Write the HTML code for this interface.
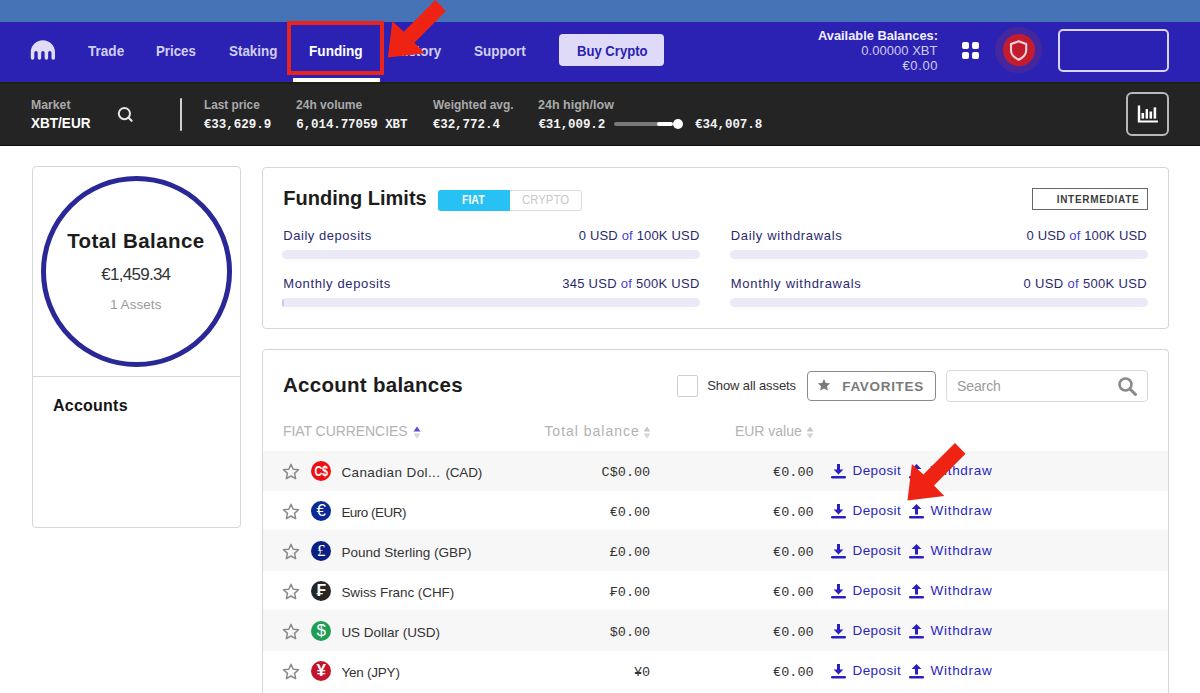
<!DOCTYPE html>
<html><head><meta charset="utf-8"><style>
html,body{margin:0;padding:0;width:1200px;height:693px;overflow:hidden;background:#fff;}
.b{position:absolute;}
.t{position:absolute;white-space:pre;}
</style></head><body>
<div class="b" style="left:0px;top:0px;width:1200px;height:22px;background:#4672b6"></div>
<div class="b" style="left:0px;top:22px;width:1200px;height:60px;background:#2b22b4"></div>
<div class="b" style="left:0px;top:82px;width:1200px;height:64px;background:#242424"></div>
<div class="b" style="left:0px;top:82px;width:1200px;height:1.5px;background:#1f1f0c"></div>
<div class="b" style="left:0px;top:145px;width:1200px;height:1px;background:#0c0c0c"></div>
<svg class="b" style="left:30px;top:40px" width="27" height="21" viewBox="0 0 27 21"><path fill="#e0dcf8" d="M12.9 0.2C6.2 0.2 0.8 5.6 0.8 12.2V18.05a1.75 1.75 0 0 0 3.5 0V12.7a1.7 1.7 0 0 1 3.4 0V18.05a1.75 1.75 0 0 0 3.5 0V12.7a1.7 1.7 0 0 1 3.4 0V18.05a1.75 1.75 0 0 0 3.5 0V12.7a1.7 1.7 0 0 1 3.4 0V18.05a1.75 1.75 0 0 0 3.5 0V12.2C25 5.6 19.6 0.2 12.9 0.2z"/></svg>
<div class="t" style="left:87.50px;top:41.54px;font-size:14.60px;line-height:18px;font-weight:bold;color:#d2cef2;letter-spacing:0.000px;font-family:'Liberation Sans',sans-serif;transform:scaleX(0.9295);transform-origin:0.00px 0;">Trade</div>
<div class="t" style="left:156.30px;top:41.54px;font-size:14.60px;line-height:18px;font-weight:bold;color:#d2cef2;letter-spacing:0.000px;font-family:'Liberation Sans',sans-serif;transform:scaleX(0.9102);transform-origin:0.00px 0;">Prices</div>
<div class="t" style="left:228.80px;top:41.54px;font-size:14.60px;line-height:18px;font-weight:bold;color:#d2cef2;letter-spacing:0.000px;font-family:'Liberation Sans',sans-serif;transform:scaleX(0.9177);transform-origin:0.00px 0;">Staking</div>
<div class="t" style="left:309.20px;top:41.54px;font-size:14.60px;line-height:18px;font-weight:bold;color:#ffffff;letter-spacing:0.000px;font-family:'Liberation Sans',sans-serif;transform:scaleX(0.9329);transform-origin:0.00px 0;">Funding</div>
<div class="t" style="left:395.00px;top:41.54px;font-size:14.60px;line-height:18px;font-weight:bold;color:#d2cef2;letter-spacing:0.000px;font-family:'Liberation Sans',sans-serif;transform:scaleX(0.9166);transform-origin:0.00px 0;">History</div>
<div class="t" style="left:474.30px;top:41.54px;font-size:14.60px;line-height:18px;font-weight:bold;color:#d2cef2;letter-spacing:0.000px;font-family:'Liberation Sans',sans-serif;transform:scaleX(0.9240);transform-origin:0.00px 0;">Support</div>
<div class="b" style="left:559px;top:34px;width:105px;height:32px;background:#dedaf8;border-radius:4px"></div>
<div class="t" style="left:576.50px;top:41.54px;font-size:14.60px;line-height:18px;font-weight:bold;color:#2a22b0;letter-spacing:0.000px;font-family:'Liberation Sans',sans-serif;transform:scaleX(0.8971);transform-origin:0.00px 0;">Buy Crypto</div>
<div class="b" style="left:293px;top:78px;width:87px;height:4px;background:#ffffff"></div>
<div class="t" style="left:817.50px;top:28.54px;font-size:12.30px;line-height:15px;font-weight:bold;color:#f2f0ff;letter-spacing:0.000px;font-family:'Liberation Sans',sans-serif;transform:scaleX(1.0426);transform-origin:0.00px 0;">Available Balances:</div>
<div class="t" style="left:861.30px;top:42.79px;font-size:13.00px;line-height:16px;font-weight:normal;color:#cfcaf2;letter-spacing:0.031px;font-family:'Liberation Sans',sans-serif;">0.00000 XBT</div>
<div class="t" style="left:902.50px;top:57.79px;font-size:13.00px;line-height:16px;font-weight:normal;color:#cfcaf2;letter-spacing:0.617px;font-family:'Liberation Sans',sans-serif;">€0.00</div>
<div class="b" style="left:962.2px;top:42px;width:7.2px;height:7.2px;background:#fff;border-radius:2px"></div>
<div class="b" style="left:971.8px;top:42px;width:7.2px;height:7.2px;background:#fff;border-radius:2px"></div>
<div class="b" style="left:962.2px;top:51.5px;width:7.2px;height:7.2px;background:#fff;border-radius:2px"></div>
<div class="b" style="left:971.8px;top:51.5px;width:7.2px;height:7.2px;background:#fff;border-radius:2px"></div>
<div class="b" style="left:995px;top:27px;width:46.5px;height:46px;background:#44279f;border-radius:50%"></div>
<div class="b" style="left:1002.5px;top:34px;width:32.5px;height:32px;background:#c41c2f;border-radius:50%"></div>
<svg class="b" style="left:1009px;top:40px" width="20" height="22" viewBox="0 0 20 22"><path fill="none" stroke="#f6d4d8" stroke-width="2.1" stroke-linejoin="round" d="M9.6 1.3L2 4.1v6.2c0 3.9 3.3 7.4 7.6 9.5 4.3-2.1 7.6-5.6 7.6-9.5V4.1z"/></svg>
<div class="b" style="left:1058px;top:29px;width:111px;height:43px;border:2px solid #d8d4f6;border-radius:5px;box-sizing:border-box"></div>
<div class="t" style="left:31.30px;top:97.17px;font-size:12.50px;line-height:16px;font-weight:bold;color:#a9a9a9;letter-spacing:0.000px;font-family:'Liberation Sans',sans-serif;transform:scaleX(0.9806);transform-origin:0.00px 0;">Market</div>
<div class="t" style="left:31.30px;top:113.97px;font-size:14.50px;line-height:18px;font-weight:bold;color:#ffffff;letter-spacing:0.000px;font-family:'Liberation Sans',sans-serif;transform:scaleX(0.9347);transform-origin:0.00px 0;">XBT/EUR</div>
<svg class="b" style="left:116.7px;top:106px" width="18" height="17" viewBox="0 0 18 17"><circle cx="7.4" cy="7.6" r="5.6" fill="none" stroke="#e6e6e6" stroke-width="2"/><path d="M11.6 11.8L14.6 14.8" stroke="#e6e6e6" stroke-width="2.2" stroke-linecap="round"/></svg>
<div class="b" style="left:180px;top:97.7px;width:2.4px;height:33.6px;background:#d0d0d0;border-radius:1.2px"></div>
<div class="t" style="left:203.75px;top:97.17px;font-size:12.50px;line-height:16px;font-weight:bold;color:#a9a9a9;letter-spacing:0.000px;font-family:'Liberation Sans',sans-serif;transform:scaleX(0.9439);transform-origin:0.00px 0;">Last price</div>
<div class="t" style="left:203.75px;top:117.17px;font-size:12.50px;line-height:16px;font-weight:bold;color:#f4f4f4;letter-spacing:0.000px;font-family:'Liberation Mono',monospace;">€33,629.9</div>
<div class="t" style="left:296.25px;top:97.17px;font-size:12.50px;line-height:16px;font-weight:bold;color:#a9a9a9;letter-spacing:0.000px;font-family:'Liberation Sans',sans-serif;transform:scaleX(0.9632);transform-origin:0.00px 0;">24h volume</div>
<div class="t" style="left:296.25px;top:117.17px;font-size:12.50px;line-height:16px;font-weight:bold;color:#f4f4f4;letter-spacing:-0.092px;font-family:'Liberation Mono',monospace;">6,014.77059 XBT</div>
<div class="t" style="left:432.70px;top:97.17px;font-size:12.50px;line-height:16px;font-weight:bold;color:#a9a9a9;letter-spacing:0.000px;font-family:'Liberation Sans',sans-serif;transform:scaleX(0.9538);transform-origin:0.00px 0;">Weighted avg.</div>
<div class="t" style="left:432.70px;top:117.17px;font-size:12.50px;line-height:16px;font-weight:bold;color:#f4f4f4;letter-spacing:-0.025px;font-family:'Liberation Mono',monospace;">€32,772.4</div>
<div class="t" style="left:538.40px;top:97.17px;font-size:12.50px;line-height:16px;font-weight:bold;color:#a9a9a9;letter-spacing:0.000px;font-family:'Liberation Sans',sans-serif;transform:scaleX(1.0024);transform-origin:0.00px 0;">24h high/low</div>
<div class="t" style="left:538.40px;top:117.17px;font-size:12.50px;line-height:16px;font-weight:bold;color:#f4f4f4;letter-spacing:-0.087px;font-family:'Liberation Mono',monospace;">€31,009.2</div>
<div class="b" style="left:614px;top:122px;width:58px;height:4px;background:#7a7a7a;border-radius:2px"></div>
<div class="b" style="left:657px;top:122px;width:16px;height:4px;background:#ffffff;border-radius:2px"></div>
<div class="b" style="left:673px;top:119px;width:10px;height:10px;background:#ffffff;border-radius:50%"></div>
<div class="t" style="left:695.00px;top:117.17px;font-size:12.50px;line-height:16px;font-weight:bold;color:#f4f4f4;letter-spacing:-0.025px;font-family:'Liberation Mono',monospace;">€34,007.8</div>
<div class="b" style="left:1126px;top:92px;width:43px;height:44px;border:2px solid #b8b8b8;border-radius:6px;box-sizing:border-box"></div>
<svg class="b" style="left:1130px;top:100px" width="35" height="30" viewBox="0 0 35 30"><path d="M7.8 5.4h2.4v15h17.7v2.1H7.8z" fill="#fff"/><rect x="11.5" y="13" width="2.6" height="5.6" fill="#fff"/><rect x="15.6" y="9.1" width="2.4" height="9.5" fill="#fff"/><rect x="19.5" y="11.5" width="2.6" height="7.1" fill="#fff"/><rect x="23.6" y="7.4" width="2.6" height="11.2" fill="#fff"/></svg>
<div class="b" style="left:31.5px;top:166px;width:209.5px;height:362px;border:1px solid #d6d6d6;border-radius:4px;box-sizing:border-box;background:#fff"></div>
<div class="b" style="left:32px;top:375.5px;width:208px;height:1px;background:#d6d6d6"></div>
<div class="b" style="left:41px;top:176px;width:190.5px;height:190.5px;border:5.5px solid #2a2896;border-radius:50%;box-sizing:border-box"></div>
<div class="t" style="left:67.20px;top:228.19px;font-size:20.50px;line-height:26px;font-weight:bold;color:#1c1c1c;letter-spacing:0.436px;font-family:'Liberation Sans',sans-serif;">Total Balance</div>
<div class="t" style="left:101.30px;top:264.41px;font-size:17.00px;line-height:21px;font-weight:normal;color:#333333;letter-spacing:-0.731px;font-family:'Liberation Sans',sans-serif;">€1,459.34</div>
<div class="t" style="left:110.00px;top:296.22px;font-size:13.50px;line-height:17px;font-weight:normal;color:#9a9a9a;letter-spacing:0.053px;font-family:'Liberation Sans',sans-serif;">1 Assets</div>
<div class="t" style="left:53.00px;top:395.65px;font-size:16.00px;line-height:20px;font-weight:bold;color:#141414;letter-spacing:0.240px;font-family:'Liberation Sans',sans-serif;">Accounts</div>
<div class="b" style="left:262px;top:166.5px;width:906.5px;height:162px;border:1px solid #d6d6d6;border-radius:4px;box-sizing:border-box;background:#fff"></div>
<div class="t" style="left:283.30px;top:186.37px;font-size:20.00px;line-height:25px;font-weight:bold;color:#1c1c1c;letter-spacing:0.008px;font-family:'Liberation Sans',sans-serif;">Funding Limits</div>
<div class="b" style="left:438px;top:189.5px;width:144px;height:21.5px;border:1px solid #dcdcdc;border-radius:3px;box-sizing:border-box"></div>
<div class="b" style="left:438px;top:189.5px;width:72px;height:21.5px;background:#27c1f4;border-radius:3px 0 0 3px"></div>
<div class="t" style="left:461.90px;top:192.07px;font-size:12.50px;line-height:16px;font-weight:bold;color:#ffffff;letter-spacing:0.000px;font-family:'Liberation Sans',sans-serif;transform:scaleX(0.8419);transform-origin:0.00px 0;">FIAT</div>
<div class="t" style="left:522.00px;top:192.07px;font-size:12.50px;line-height:16px;font-weight:normal;color:#c8c8c8;letter-spacing:0.000px;font-family:'Liberation Sans',sans-serif;transform:scaleX(0.9104);transform-origin:0.00px 0;">CRYPTO</div>
<div class="b" style="left:1032px;top:188.3px;width:116px;height:21.3px;border:1px solid #666;box-sizing:border-box"></div>
<div class="t" style="left:1056.70px;top:194.03px;font-size:10.00px;line-height:12px;font-weight:bold;color:#3c3c3c;letter-spacing:0.705px;font-family:'Liberation Sans',sans-serif;">INTERMEDIATE</div>
<div class="t" style="left:283.30px;top:227.79px;font-size:13.00px;line-height:16px;font-weight:normal;color:#2b2a6e;letter-spacing:0.537px;font-family:'Liberation Sans',sans-serif;">Daily deposits</div>
<div class="t" style="left:578.70px;top:227.79px;font-size:13.00px;line-height:16px;font-weight:normal;color:#2b2a6e;letter-spacing:0.176px;font-family:'Liberation Sans',sans-serif;">0 USD <span style="color:#4a40cc">of</span> 100K USD</div>
<div class="b" style="left:282px;top:250px;width:418px;height:9px;background:#ebe9f8;border-radius:4.5px"></div>
<div class="t" style="left:283.30px;top:276.29px;font-size:13.00px;line-height:16px;font-weight:normal;color:#2b2a6e;letter-spacing:0.629px;font-family:'Liberation Sans',sans-serif;">Monthly deposits</div>
<div class="t" style="left:562.20px;top:276.29px;font-size:13.00px;line-height:16px;font-weight:normal;color:#2b2a6e;letter-spacing:0.270px;font-family:'Liberation Sans',sans-serif;">345 USD <span style="color:#4a40cc">of</span> 500K USD</div>
<div class="b" style="left:282px;top:298px;width:418px;height:9px;background:#ebe9f8;border-radius:4.5px"></div>
<div class="b" style="left:282px;top:298.5px;width:2px;height:8px;background:#cdc8f2;border-radius:4px 0 0 4px"></div>
<div class="t" style="left:730.70px;top:227.79px;font-size:13.00px;line-height:16px;font-weight:normal;color:#2b2a6e;letter-spacing:0.661px;font-family:'Liberation Sans',sans-serif;">Daily withdrawals</div>
<div class="t" style="left:1026.50px;top:227.79px;font-size:13.00px;line-height:16px;font-weight:normal;color:#2b2a6e;letter-spacing:0.151px;font-family:'Liberation Sans',sans-serif;">0 USD <span style="color:#4a40cc">of</span> 100K USD</div>
<div class="b" style="left:730px;top:250px;width:418px;height:9px;background:#ebe9f8;border-radius:4.5px"></div>
<div class="t" style="left:730.70px;top:276.29px;font-size:13.00px;line-height:16px;font-weight:normal;color:#2b2a6e;letter-spacing:0.726px;font-family:'Liberation Sans',sans-serif;">Monthly withdrawals</div>
<div class="t" style="left:1023.40px;top:276.29px;font-size:13.00px;line-height:16px;font-weight:normal;color:#2b2a6e;letter-spacing:0.345px;font-family:'Liberation Sans',sans-serif;">0 USD <span style="color:#4a40cc">of</span> 500K USD</div>
<div class="b" style="left:730px;top:298px;width:418px;height:9px;background:#ebe9f8;border-radius:4.5px"></div>
<div class="b" style="left:262px;top:348.5px;width:906.5px;height:400px;border:1px solid #d6d6d6;border-radius:4px;box-sizing:border-box;background:#fff"></div>
<div class="t" style="left:283.00px;top:372.09px;font-size:20.50px;line-height:26px;font-weight:bold;color:#1c1c1c;letter-spacing:0.278px;font-family:'Liberation Sans',sans-serif;">Account balances</div>
<div class="b" style="left:677px;top:375px;width:21px;height:21.5px;border:1px solid #cfcfcf;border-radius:2px;box-sizing:border-box;background:#fff"></div>
<div class="t" style="left:707.30px;top:378.29px;font-size:13.00px;line-height:16px;font-weight:normal;color:#333333;letter-spacing:-0.116px;font-family:'Liberation Sans',sans-serif;">Show all assets</div>
<div class="b" style="left:807px;top:370.5px;width:128.5px;height:30px;border:1.5px solid #8a8a8a;border-radius:4px;box-sizing:border-box"></div>
<svg class="b" style="left:817px;top:378px" width="14" height="14" viewBox="0 0 24 24"><path fill="#7a7a7a" d="M12 1.5l3.2 6.9 7.3.8-5.4 5 1.5 7.3L12 17.8l-6.6 3.7 1.5-7.3-5.4-5 7.3-.8z"/></svg>
<div class="t" style="left:842.20px;top:377.62px;font-size:13.50px;line-height:17px;font-weight:bold;color:#7a7a7a;letter-spacing:0.688px;font-family:'Liberation Sans',sans-serif;">FAVORITES</div>
<div class="b" style="left:945.5px;top:369.5px;width:202.5px;height:32px;border:1px solid #d8d8d8;border-radius:4px;box-sizing:border-box"></div>
<div class="t" style="left:957.00px;top:376.95px;font-size:14.00px;line-height:18px;font-weight:normal;color:#9a9a9a;letter-spacing:-0.109px;font-family:'Liberation Sans',sans-serif;">Search</div>
<svg class="b" style="left:1117px;top:376px" width="21" height="20" viewBox="0 0 21 20"><circle cx="8.5" cy="8.5" r="6" fill="none" stroke="#8a8a8a" stroke-width="2.6"/><path d="M13 13L18.5 18.5" stroke="#8a8a8a" stroke-width="3" stroke-linecap="round"/></svg>
<div class="t" style="left:283.00px;top:422.45px;font-size:14.00px;line-height:18px;font-weight:normal;color:#b2b2b2;letter-spacing:-0.065px;font-family:'Liberation Sans',sans-serif;">FIAT CURRENCIES</div>
<svg class="b" style="left:413px;top:426px" width="8" height="13" viewBox="0 0 8 13"><path d="M4 0.5L7.5 5.5H0.5z" fill="#5a50d0"/><path d="M4 12.5L7.5 7.5H0.5z" fill="#d6d6d6"/></svg>
<div class="t" style="left:544.40px;top:422.45px;font-size:14.00px;line-height:18px;font-weight:normal;color:#b2b2b2;letter-spacing:0.984px;font-family:'Liberation Sans',sans-serif;">Total balance</div>
<svg class="b" style="left:643px;top:426px" width="8" height="13" viewBox="0 0 8 13"><path d="M4 0.5L7.5 5.5H0.5z" fill="#c8c8c8"/><path d="M4 12.5L7.5 7.5H0.5z" fill="#d6d6d6"/></svg>
<div class="t" style="left:734.90px;top:422.45px;font-size:14.00px;line-height:18px;font-weight:normal;color:#b2b2b2;letter-spacing:-0.003px;font-family:'Liberation Sans',sans-serif;">EUR value</div>
<svg class="b" style="left:806px;top:426px" width="8" height="13" viewBox="0 0 8 13"><path d="M4 0.5L7.5 5.5H0.5z" fill="#c8c8c8"/><path d="M4 12.5L7.5 7.5H0.5z" fill="#d6d6d6"/></svg>
<div class="b" style="left:263px;top:451px;width:904.5px;height:40px;background:#f7f7f7;border-bottom:1px dotted #efefef;background-clip:padding-box;box-sizing:border-box"></div>
<svg class="b" style="left:282px;top:462.8px" width="18" height="17" viewBox="0 0 24 23"><path fill="none" stroke="#8a8a8a" stroke-width="2" stroke-linejoin="round" d="M12 1.8l3 6.6 7.2.8-5.4 4.9 1.5 7.1L12 17.6l-6.3 3.6 1.5-7.1L1.8 9.2 9 8.4z"/></svg>
<div class="b" style="left:311px;top:461.2px;width:20px;height:20px;background:#ee0f12;border-radius:50%"></div>
<div class="t" style="left:341.40px;top:463.52px;font-size:13.50px;line-height:17px;font-weight:normal;color:#333333;letter-spacing:0.397px;font-family:'Liberation Sans',sans-serif;">Canadian Dol...</div>
<div class="t" style="left:445.50px;top:463.52px;font-size:13.50px;line-height:17px;font-weight:normal;color:#333333;letter-spacing:-0.199px;font-family:'Liberation Sans',sans-serif;">(CAD)</div>
<div class="t" style="left:601.60px;top:464.41px;font-size:13.50px;line-height:17px;font-weight:normal;color:#333333;letter-spacing:0.000px;font-family:'Liberation Mono',monospace;">C$0.00</div>
<div class="t" style="left:773.10px;top:464.41px;font-size:13.50px;line-height:17px;font-weight:normal;color:#333333;letter-spacing:0.000px;font-family:'Liberation Mono',monospace;">€0.00</div>
<svg class="b" style="left:830.8px;top:463.7px" width="15" height="15" viewBox="0 0 15 15"><path fill="#2a1fc2" d="M6 0h3v5.6h3.4L7.5 10.6 2.6 5.6H6z"/><rect x="0" y="12" width="15" height="2.5" rx="1.2" fill="#2a1fc2"/></svg>
<div class="t" style="left:852.50px;top:462.42px;font-size:13.50px;line-height:17px;font-weight:normal;color:#2a1fc2;letter-spacing:0.406px;font-family:'Liberation Sans',sans-serif;">Deposit</div>
<svg class="b" style="left:908.7px;top:463.7px" width="15" height="15" viewBox="0 0 15 15"><path fill="#2a1fc2" d="M6 10.6h3V5h3.4L7.5 0 2.6 5H6z"/><rect x="0" y="12" width="15" height="2.5" rx="1.2" fill="#2a1fc2"/></svg>
<div class="t" style="left:930.50px;top:462.42px;font-size:13.50px;line-height:17px;font-weight:normal;color:#2a1fc2;letter-spacing:0.715px;font-family:'Liberation Sans',sans-serif;">Withdraw</div>
<div class="t" style="left:311px;top:461.2px;width:20px;height:20px;line-height:20px;text-align:center;font-size:15px;font-weight:bold;color:#fff;font-family:'Liberation Sans',sans-serif;transform:scaleX(0.72);letter-spacing:-0.5px">C$</div>
<div class="b" style="left:263px;top:491px;width:904.5px;height:40px;background:#ffffff;border-bottom:1px dotted #f1f1f1;background-clip:padding-box;box-sizing:border-box"></div>
<svg class="b" style="left:282px;top:502.8px" width="18" height="17" viewBox="0 0 24 23"><path fill="none" stroke="#8a8a8a" stroke-width="2" stroke-linejoin="round" d="M12 1.8l3 6.6 7.2.8-5.4 4.9 1.5 7.1L12 17.6l-6.3 3.6 1.5-7.1L1.8 9.2 9 8.4z"/></svg>
<div class="b" style="left:311px;top:501.2px;width:20px;height:20px;background:#0b2a98;border-radius:50%"></div>
<div class="t" style="left:341.40px;top:503.52px;font-size:13.50px;line-height:17px;font-weight:normal;color:#333333;letter-spacing:-0.529px;font-family:'Liberation Sans',sans-serif;">Euro (EUR)</div>
<div class="t" style="left:609.70px;top:504.41px;font-size:13.50px;line-height:17px;font-weight:normal;color:#333333;letter-spacing:0.000px;font-family:'Liberation Mono',monospace;">€0.00</div>
<div class="t" style="left:773.10px;top:504.41px;font-size:13.50px;line-height:17px;font-weight:normal;color:#333333;letter-spacing:0.000px;font-family:'Liberation Mono',monospace;">€0.00</div>
<svg class="b" style="left:830.8px;top:503.7px" width="15" height="15" viewBox="0 0 15 15"><path fill="#2a1fc2" d="M6 0h3v5.6h3.4L7.5 10.6 2.6 5.6H6z"/><rect x="0" y="12" width="15" height="2.5" rx="1.2" fill="#2a1fc2"/></svg>
<div class="t" style="left:852.50px;top:502.42px;font-size:13.50px;line-height:17px;font-weight:normal;color:#2a1fc2;letter-spacing:0.406px;font-family:'Liberation Sans',sans-serif;">Deposit</div>
<svg class="b" style="left:908.7px;top:503.7px" width="15" height="15" viewBox="0 0 15 15"><path fill="#2a1fc2" d="M6 10.6h3V5h3.4L7.5 0 2.6 5H6z"/><rect x="0" y="12" width="15" height="2.5" rx="1.2" fill="#2a1fc2"/></svg>
<div class="t" style="left:930.50px;top:502.42px;font-size:13.50px;line-height:17px;font-weight:normal;color:#2a1fc2;letter-spacing:0.715px;font-family:'Liberation Sans',sans-serif;">Withdraw</div>
<div class="t" style="left:311px;top:501.2px;width:20px;height:20px;line-height:20px;text-align:center;font-size:17px;font-weight:normal;color:#fff;font-family:'Liberation Sans',sans-serif;transform:none;letter-spacing:-0.5px">€</div>
<div class="b" style="left:263px;top:531px;width:904.5px;height:40px;background:#f7f7f7;border-bottom:1px dotted #efefef;background-clip:padding-box;box-sizing:border-box"></div>
<svg class="b" style="left:282px;top:542.8px" width="18" height="17" viewBox="0 0 24 23"><path fill="none" stroke="#8a8a8a" stroke-width="2" stroke-linejoin="round" d="M12 1.8l3 6.6 7.2.8-5.4 4.9 1.5 7.1L12 17.6l-6.3 3.6 1.5-7.1L1.8 9.2 9 8.4z"/></svg>
<div class="b" style="left:311px;top:541.2px;width:20px;height:20px;background:#0b1e82;border-radius:50%"></div>
<div class="t" style="left:341.40px;top:543.52px;font-size:13.50px;line-height:17px;font-weight:normal;color:#333333;letter-spacing:0.021px;font-family:'Liberation Sans',sans-serif;">Pound Sterling (GBP)</div>
<div class="t" style="left:609.70px;top:544.41px;font-size:13.50px;line-height:17px;font-weight:normal;color:#333333;letter-spacing:0.000px;font-family:'Liberation Mono',monospace;">£0.00</div>
<div class="t" style="left:773.10px;top:544.41px;font-size:13.50px;line-height:17px;font-weight:normal;color:#333333;letter-spacing:0.000px;font-family:'Liberation Mono',monospace;">€0.00</div>
<svg class="b" style="left:830.8px;top:543.7px" width="15" height="15" viewBox="0 0 15 15"><path fill="#2a1fc2" d="M6 0h3v5.6h3.4L7.5 10.6 2.6 5.6H6z"/><rect x="0" y="12" width="15" height="2.5" rx="1.2" fill="#2a1fc2"/></svg>
<div class="t" style="left:852.50px;top:542.42px;font-size:13.50px;line-height:17px;font-weight:normal;color:#2a1fc2;letter-spacing:0.406px;font-family:'Liberation Sans',sans-serif;">Deposit</div>
<svg class="b" style="left:908.7px;top:543.7px" width="15" height="15" viewBox="0 0 15 15"><path fill="#2a1fc2" d="M6 10.6h3V5h3.4L7.5 0 2.6 5H6z"/><rect x="0" y="12" width="15" height="2.5" rx="1.2" fill="#2a1fc2"/></svg>
<div class="t" style="left:930.50px;top:542.42px;font-size:13.50px;line-height:17px;font-weight:normal;color:#2a1fc2;letter-spacing:0.715px;font-family:'Liberation Sans',sans-serif;">Withdraw</div>
<div class="t" style="left:311px;top:541.2px;width:20px;height:20px;line-height:20px;text-align:center;font-size:17px;font-weight:normal;color:#fff;font-family:'Liberation Serif',serif;transform:none;letter-spacing:-0.5px">£</div>
<div class="b" style="left:263px;top:571px;width:904.5px;height:40px;background:#ffffff;border-bottom:1px dotted #f1f1f1;background-clip:padding-box;box-sizing:border-box"></div>
<svg class="b" style="left:282px;top:582.8px" width="18" height="17" viewBox="0 0 24 23"><path fill="none" stroke="#8a8a8a" stroke-width="2" stroke-linejoin="round" d="M12 1.8l3 6.6 7.2.8-5.4 4.9 1.5 7.1L12 17.6l-6.3 3.6 1.5-7.1L1.8 9.2 9 8.4z"/></svg>
<div class="b" style="left:311px;top:581.2px;width:20px;height:20px;background:#262626;border-radius:50%"></div>
<div class="t" style="left:341.40px;top:583.52px;font-size:13.50px;line-height:17px;font-weight:normal;color:#333333;letter-spacing:-0.069px;font-family:'Liberation Sans',sans-serif;">Swiss Franc (CHF)</div>
<div class="t" style="left:609.70px;top:584.41px;font-size:13.50px;line-height:17px;font-weight:normal;color:#333333;letter-spacing:0.000px;font-family:'Liberation Mono',monospace;">₣0.00</div>
<div class="t" style="left:773.10px;top:584.41px;font-size:13.50px;line-height:17px;font-weight:normal;color:#333333;letter-spacing:0.000px;font-family:'Liberation Mono',monospace;">€0.00</div>
<svg class="b" style="left:830.8px;top:583.7px" width="15" height="15" viewBox="0 0 15 15"><path fill="#2a1fc2" d="M6 0h3v5.6h3.4L7.5 10.6 2.6 5.6H6z"/><rect x="0" y="12" width="15" height="2.5" rx="1.2" fill="#2a1fc2"/></svg>
<div class="t" style="left:852.50px;top:582.42px;font-size:13.50px;line-height:17px;font-weight:normal;color:#2a1fc2;letter-spacing:0.406px;font-family:'Liberation Sans',sans-serif;">Deposit</div>
<svg class="b" style="left:908.7px;top:583.7px" width="15" height="15" viewBox="0 0 15 15"><path fill="#2a1fc2" d="M6 10.6h3V5h3.4L7.5 0 2.6 5H6z"/><rect x="0" y="12" width="15" height="2.5" rx="1.2" fill="#2a1fc2"/></svg>
<div class="t" style="left:930.50px;top:582.42px;font-size:13.50px;line-height:17px;font-weight:normal;color:#2a1fc2;letter-spacing:0.715px;font-family:'Liberation Sans',sans-serif;">Withdraw</div>
<div class="t" style="left:311px;top:581.2px;width:20px;height:20px;line-height:20px;text-align:center;font-size:17px;font-weight:bold;color:#fff;font-family:'Liberation Sans',sans-serif;transform:none;letter-spacing:-0.5px">₣</div>
<div class="b" style="left:263px;top:611px;width:904.5px;height:40px;background:#f7f7f7;border-bottom:1px dotted #efefef;background-clip:padding-box;box-sizing:border-box"></div>
<svg class="b" style="left:282px;top:622.8px" width="18" height="17" viewBox="0 0 24 23"><path fill="none" stroke="#8a8a8a" stroke-width="2" stroke-linejoin="round" d="M12 1.8l3 6.6 7.2.8-5.4 4.9 1.5 7.1L12 17.6l-6.3 3.6 1.5-7.1L1.8 9.2 9 8.4z"/></svg>
<div class="b" style="left:311px;top:621.2px;width:20px;height:20px;background:#1f9d55;border-radius:50%"></div>
<div class="t" style="left:341.40px;top:623.52px;font-size:13.50px;line-height:17px;font-weight:normal;color:#333333;letter-spacing:-0.023px;font-family:'Liberation Sans',sans-serif;">US Dollar (USD)</div>
<div class="t" style="left:609.70px;top:624.41px;font-size:13.50px;line-height:17px;font-weight:normal;color:#333333;letter-spacing:0.000px;font-family:'Liberation Mono',monospace;">$0.00</div>
<div class="t" style="left:773.10px;top:624.41px;font-size:13.50px;line-height:17px;font-weight:normal;color:#333333;letter-spacing:0.000px;font-family:'Liberation Mono',monospace;">€0.00</div>
<svg class="b" style="left:830.8px;top:623.7px" width="15" height="15" viewBox="0 0 15 15"><path fill="#2a1fc2" d="M6 0h3v5.6h3.4L7.5 10.6 2.6 5.6H6z"/><rect x="0" y="12" width="15" height="2.5" rx="1.2" fill="#2a1fc2"/></svg>
<div class="t" style="left:852.50px;top:622.42px;font-size:13.50px;line-height:17px;font-weight:normal;color:#2a1fc2;letter-spacing:0.406px;font-family:'Liberation Sans',sans-serif;">Deposit</div>
<svg class="b" style="left:908.7px;top:623.7px" width="15" height="15" viewBox="0 0 15 15"><path fill="#2a1fc2" d="M6 10.6h3V5h3.4L7.5 0 2.6 5H6z"/><rect x="0" y="12" width="15" height="2.5" rx="1.2" fill="#2a1fc2"/></svg>
<div class="t" style="left:930.50px;top:622.42px;font-size:13.50px;line-height:17px;font-weight:normal;color:#2a1fc2;letter-spacing:0.715px;font-family:'Liberation Sans',sans-serif;">Withdraw</div>
<div class="t" style="left:311px;top:621.2px;width:20px;height:20px;line-height:20px;text-align:center;font-size:17px;font-weight:normal;color:#fff;font-family:'Liberation Sans',sans-serif;transform:none;letter-spacing:-0.5px">$</div>
<div class="b" style="left:263px;top:651px;width:904.5px;height:40px;background:#ffffff;border-bottom:1px dotted #f1f1f1;background-clip:padding-box;box-sizing:border-box"></div>
<svg class="b" style="left:282px;top:662.8px" width="18" height="17" viewBox="0 0 24 23"><path fill="none" stroke="#8a8a8a" stroke-width="2" stroke-linejoin="round" d="M12 1.8l3 6.6 7.2.8-5.4 4.9 1.5 7.1L12 17.6l-6.3 3.6 1.5-7.1L1.8 9.2 9 8.4z"/></svg>
<div class="b" style="left:311px;top:661.2px;width:20px;height:20px;background:#c4142c;border-radius:50%"></div>
<div class="t" style="left:341.40px;top:663.52px;font-size:13.50px;line-height:17px;font-weight:normal;color:#333333;letter-spacing:-0.222px;font-family:'Liberation Sans',sans-serif;">Yen (JPY)</div>
<div class="t" style="left:634.00px;top:664.41px;font-size:13.50px;line-height:17px;font-weight:normal;color:#333333;letter-spacing:0.000px;font-family:'Liberation Mono',monospace;">¥0</div>
<div class="t" style="left:773.10px;top:664.41px;font-size:13.50px;line-height:17px;font-weight:normal;color:#333333;letter-spacing:0.000px;font-family:'Liberation Mono',monospace;">€0.00</div>
<svg class="b" style="left:830.8px;top:663.7px" width="15" height="15" viewBox="0 0 15 15"><path fill="#2a1fc2" d="M6 0h3v5.6h3.4L7.5 10.6 2.6 5.6H6z"/><rect x="0" y="12" width="15" height="2.5" rx="1.2" fill="#2a1fc2"/></svg>
<div class="t" style="left:852.50px;top:662.42px;font-size:13.50px;line-height:17px;font-weight:normal;color:#2a1fc2;letter-spacing:0.406px;font-family:'Liberation Sans',sans-serif;">Deposit</div>
<svg class="b" style="left:908.7px;top:663.7px" width="15" height="15" viewBox="0 0 15 15"><path fill="#2a1fc2" d="M6 10.6h3V5h3.4L7.5 0 2.6 5H6z"/><rect x="0" y="12" width="15" height="2.5" rx="1.2" fill="#2a1fc2"/></svg>
<div class="t" style="left:930.50px;top:662.42px;font-size:13.50px;line-height:17px;font-weight:normal;color:#2a1fc2;letter-spacing:0.715px;font-family:'Liberation Sans',sans-serif;">Withdraw</div>
<div class="t" style="left:311px;top:661.2px;width:20px;height:20px;line-height:20px;text-align:center;font-size:17px;font-weight:bold;color:#fff;font-family:'Liberation Sans',sans-serif;transform:none;letter-spacing:-0.5px">¥</div>
<div class="b" style="left:287px;top:21px;width:96.5px;height:53.5px;border:4px solid #e8241c;box-sizing:border-box"></div>
<svg class="b" style="left:0;top:0" width="1200" height="693"><polygon fill="#ee2314" points="387.9,57.6 392.3,21.2 403.8,31.7 435.4,0.1 445.9,10.9 414.4,42.8 424.7,53.3"/></svg>
<svg class="b" style="left:0;top:0" width="1200" height="693"><polygon fill="#ee2314" points="907.5,500.4 911.9,464.0 923.4,474.5 955.0,442.9 965.5,453.7 934.0,485.6 944.3,496.1"/></svg>
</body></html>
